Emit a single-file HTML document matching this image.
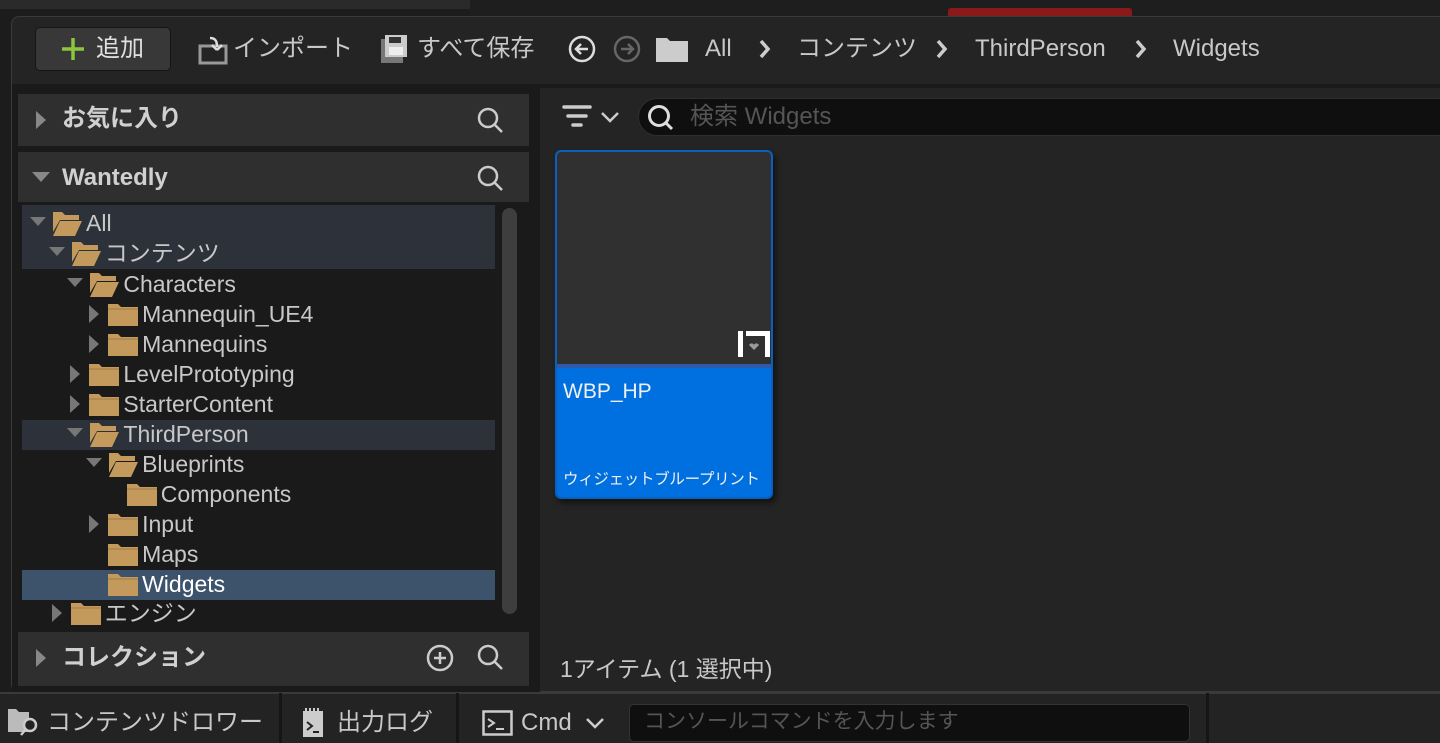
<!DOCTYPE html>
<html><head><meta charset="utf-8"><style>
*{margin:0;padding:0;box-sizing:border-box}
body{width:1440px;height:743px;overflow:hidden;background:#1c1c1c;font-family:"Liberation Sans","Noto Sans CJK JP",sans-serif;color:#c8c8c8;position:relative}
.a{position:absolute}
.t{position:absolute;white-space:nowrap;line-height:30px;font-size:23px}
</style></head><body>
<div class="a" style="left:0;top:0;width:470px;height:9px;background:#2a2a2a"></div>
<div class="a" style="left:470px;top:0;width:970px;height:16px;background:#1e1e1e"></div>
<div class="a" style="left:948px;top:8px;width:184px;height:10px;background:#8a1a1a;border-radius:3px"></div>
<div class="a" style="left:11px;top:16px;width:1440px;height:676px;background:#242424;border:1px solid #3a3a3a;border-radius:8px"></div>
<div class="a" style="left:35px;top:27px;width:136px;height:44px;background:#383838;border:1px solid #151515;border-radius:5px"></div>
<svg class="a" style="left:60px;top:36px" width="26" height="26"><path d="M13 2V24M2 13H24" stroke="#8cc63f" stroke-width="3.5"/></svg>
<div class="t" style="left:96px;top:34px;font-size:24px;color:#e0e0e0">追加</div>
<svg class="a" style="left:198px;top:34px" width="32" height="32"><rect x="2" y="12" width="26" height="17" fill="none" stroke="#999" stroke-width="3"/><path d="M12 4c6 0 7 4 7 9M19 16l-5-5M19 16l5-5" stroke="#ddd" stroke-width="2.5" fill="none"/></svg>
<div class="t" style="left:233px;top:34px;font-size:24px">インポート</div>
<svg class="a" style="left:381px;top:35px" width="28" height="28"><rect x="0" y="4" width="22" height="24" fill="#777"/><rect x="4" y="0" width="22" height="22" fill="#ccc"/><rect x="8" y="2" width="12" height="6" fill="#333"/><rect x="8" y="12" width="14" height="8" fill="#eee"/></svg>
<div class="t" style="left:417px;top:34px;font-size:24px">すべて保存</div>
<svg class="a" style="left:567px;top:34px" width="30" height="30"><circle cx="15" cy="15" r="12" fill="none" stroke="#ddd" stroke-width="2.5"/><path d="M21 15H9M14 10l-5 5 5 5" stroke="#ddd" stroke-width="2.5" fill="none"/></svg>
<svg class="a" style="left:612px;top:34px" width="30" height="30"><circle cx="15" cy="15" r="12" fill="none" stroke="#666" stroke-width="2.5"/><path d="M9 15H21M16 10l5 5-5 5" stroke="#666" stroke-width="2.5" fill="none"/></svg>
<svg class="a" style="left:656px;top:36px" width="32" height="26"><path d="M0 2h11l3 3h18v21H0z" fill="#ccc"/></svg>
<div class="t" style="left:705px;top:34px;font-size:24px">All</div>
<svg class="a" style="left:758px;top:39px" width="14" height="20"><path d="M3 2l7 8-7 8" stroke="#ccc" stroke-width="3.5" fill="none"/></svg>
<div class="t" style="left:797px;top:34px;font-size:24px">コンテンツ</div>
<svg class="a" style="left:935px;top:39px" width="14" height="20"><path d="M3 2l7 8-7 8" stroke="#ccc" stroke-width="3.5" fill="none"/></svg>
<div class="t" style="left:975px;top:34px;font-size:24px">ThirdPerson</div>
<svg class="a" style="left:1134px;top:39px" width="14" height="20"><path d="M3 2l7 8-7 8" stroke="#ccc" stroke-width="3.5" fill="none"/></svg>
<div class="t" style="left:1173px;top:34px;font-size:24px">Widgets</div>
<div class="a" style="left:12px;top:84px;width:1428px;height:4px;background:#1a1a1a"></div>
<div class="a" style="left:12px;top:88px;width:528px;height:604px;background:#1a1a1a"></div>
<div class="a" style="left:18px;top:94px;width:511px;height:52px;background:#2f2f2f"></div>
<svg class="a" style="left:35px;top:110px" width="12" height="20"><path d="M1 1L11 10 1 19z" fill="#888"/></svg>
<div class="t" style="left:62px;top:104px;font-size:24px;font-weight:bold;color:#d0d0d0">お気に入り</div>
<svg class="a" style="left:476px;top:106px" width="30" height="30"><circle cx="12" cy="12" r="9" fill="none" stroke="#ccc" stroke-width="2.5"/><path d="M18 18l8 8" stroke="#ccc" stroke-width="2.5"/></svg>
<div class="a" style="left:18px;top:152px;width:511px;height:50px;background:#2f2f2f"></div>
<svg class="a" style="left:31px;top:171px" width="20" height="12"><path d="M1 1H19L10 11z" fill="#888"/></svg>
<div class="t" style="left:62px;top:163px;font-size:24px;font-weight:bold;color:#d0d0d0">Wantedly</div>
<svg class="a" style="left:476px;top:164px" width="30" height="30"><circle cx="12" cy="12" r="9" fill="none" stroke="#ccc" stroke-width="2.5"/><path d="M18 18l8 8" stroke="#ccc" stroke-width="2.5"/></svg>
<div class="a" style="left:22px;top:205px;width:473px;height:64px;background:#2c313a"></div>
<div class="a" style="left:22px;top:420px;width:473px;height:30px;background:#2c313a"></div>
<div class="a" style="left:22px;top:570px;width:473px;height:30px;background:#3d536c"></div>
<div class="a" style="left:502px;top:208px;width:15px;height:406px;background:#3e3e3e;border-radius:8px"></div>
<div id="tree"></div>
<div class="a" style="left:18px;top:632px;width:511px;height:54px;background:#2f2f2f"></div>
<svg class="a" style="left:35px;top:648px" width="12" height="20"><path d="M1 1L11 10 1 19z" fill="#888"/></svg>
<div class="t" style="left:62px;top:643px;font-size:24px;font-weight:bold;color:#d0d0d0">コレクション</div>
<svg class="a" style="left:425px;top:643px" width="30" height="30"><circle cx="15" cy="15" r="12" fill="none" stroke="#ccc" stroke-width="2.5"/><path d="M15 9v12M9 15h12" stroke="#ccc" stroke-width="2.5"/></svg>
<svg class="a" style="left:476px;top:643px" width="30" height="30"><circle cx="12" cy="12" r="9" fill="none" stroke="#ccc" stroke-width="2.5"/><path d="M18 18l8 8" stroke="#ccc" stroke-width="2.5"/></svg>
<div class="a" style="left:540px;top:88px;width:900px;height:603px;background:#242424"></div>
<svg class="a" style="left:562px;top:104px" width="30" height="26"><path d="M2 3h26M6 12h18M11 21h8" stroke="#ccc" stroke-width="3.5" stroke-linecap="round"/></svg>
<svg class="a" style="left:600px;top:110px" width="20" height="14"><path d="M2 3l8 8 8-8" stroke="#ccc" stroke-width="2.5" fill="none"/></svg>
<div class="a" style="left:638px;top:98px;width:820px;height:38px;background:#0f0f0f;border:1px solid #2e2e2e;border-radius:19px"></div>
<svg class="a" style="left:645px;top:102px" width="32" height="32"><circle cx="14" cy="14" r="9.5" fill="none" stroke="#ddd" stroke-width="3"/><path d="M21 21l6 6" stroke="#ddd" stroke-width="3"/></svg>
<div class="t" style="left:690px;top:102px;font-size:24px;color:#555">検索 Widgets</div>
<div class="a" style="left:555px;top:150px;width:218px;height:349px;border:2px solid #0a5fbf;border-radius:6px;background:#303030;box-shadow:3px 4px 6px rgba(0,0,0,.5);overflow:hidden">
 <div class="a" style="left:0;top:212px;width:218px;height:4px;background:#2f5aa8"></div>
 <div class="a" style="left:0;top:216px;width:218px;height:135px;background:#0070e0"></div>
 <div class="t" style="left:6px;top:225px;font-size:21px;color:#f0f0f0">WBP_HP</div>
 <div class="t" style="left:6px;top:313px;font-size:15.5px;color:#f0f0f0;letter-spacing:-0.3px">ウィジェットブループリント</div>
</div>
<svg class="a" style="left:738px;top:331px" width="32" height="26"><rect x="0" y="0" width="5" height="26" fill="#fff"/><rect x="8" y="0" width="24" height="5" fill="#fff"/><rect x="27" y="0" width="5" height="26" fill="#fff"/><path d="M11 14c2-3 5-1 5 0 0-1 3-3 5 0l-5 5z" fill="#999"/></svg>
<div class="t" style="left:560px;top:654px;font-size:23px;color:#c8c8c8">1アイテム (1 選択中)</div>
<div class="a" style="left:0;top:692px;width:1440px;height:51px;background:#232323;border-top:2px solid #3a3a3a"></div>
<div class="a" style="left:279px;top:693px;width:3px;height:50px;background:#151515"></div>
<div class="a" style="left:456px;top:693px;width:3px;height:50px;background:#151515"></div>
<div class="a" style="left:1206px;top:693px;width:3px;height:50px;background:#151515"></div>
<svg class="a" style="left:8px;top:707px" width="34" height="30"><path d="M0 2h8l3 3h10v20H0z" fill="#bbb"/><circle cx="22" cy="18" r="6" fill="#232323" stroke="#ccc" stroke-width="2.5"/><path d="M18 22l-5 6" stroke="#ccc" stroke-width="2.5"/></svg>
<div class="t" style="left:47px;top:708px;font-size:24px">コンテンツドロワー</div>
<svg class="a" style="left:303px;top:708px" width="22" height="30"><rect x="0" y="3" width="20" height="26" fill="#ccc"/><path d="M3 0v5M7 0v5M11 0v5M15 0v5" stroke="#ccc" stroke-width="2"/><path d="M4 14l5 4-5 4M10 24h6" stroke="#222" stroke-width="2" fill="none"/></svg>
<div class="t" style="left:337px;top:708px;font-size:24px">出力ログ</div>
<svg class="a" style="left:482px;top:710px" width="32" height="26"><rect x="1.5" y="1.5" width="28" height="23" fill="none" stroke="#ccc" stroke-width="2.5"/><path d="M6 9l6 4-6 4M14 19h8" stroke="#ccc" stroke-width="2" fill="none"/></svg>
<div class="t" style="left:521px;top:708px;font-size:24px">Cmd</div>
<svg class="a" style="left:585px;top:716px" width="20" height="14"><path d="M2 3l8 8 8-8" stroke="#ccc" stroke-width="2.5" fill="none"/></svg>
<div class="a" style="left:629px;top:704px;width:561px;height:38px;background:#0f0f0f;border:1px solid #333;border-radius:5px"></div>
<div class="t" style="left:644px;top:707px;font-size:21px;color:#555">コンソールコマンドを入力します</div>
<script>
var rows=[[0,'d',1,'All',223],[1,'d',1,'コンテンツ',253],[2,'d',1,'Characters',284],[3,'r',0,'Mannequin_UE4',314],[3,'r',0,'Mannequins',344],[2,'r',0,'LevelPrototyping',374],[2,'r',0,'StarterContent',404],[2,'d',1,'ThirdPerson',434],[3,'d',1,'Blueprints',464],[4,'',0,'Components',494],[3,'r',0,'Input',524],[3,'',0,'Maps',554],[3,'',0,'Widgets',584],[1,'r',0,'エンジン',613]];
var h='';
rows.forEach(function(r){var o=r[0]*18.7,y=r[4];
if(r[1]=='d')h+='<svg class="a" style="left:'+(29+o)+'px;top:'+(y-7)+'px" width="18" height="12"><path d="M1 1H17L9 10z" fill="#777"/></svg>';
if(r[1]=='r')h+='<svg class="a" style="left:'+(32+o)+'px;top:'+(y-10)+'px" width="12" height="20"><path d="M1 1L11 10 1 19z" fill="#777"/></svg>';
if(r[2])h+='<svg class="a" style="left:'+(51+o)+'px;top:'+(y-13)+'px" width="32" height="28"><path d="M2 2h9l3 3h14v5H9L2 22z" fill="#c49a5c"/><path d="M9 11h22l-7 15H2z" fill="#c49a5c"/></svg>';
else h+='<svg class="a" style="left:'+(52+o)+'px;top:'+(y-12)+'px" width="30" height="26"><path d="M0 2h10l3 3h17v19H0z" fill="#c49a5c"/><path d="M0 7h30" stroke="#a07a44" stroke-width="1"/></svg>';
h+='<div class="t" style="left:'+(86+o)+'px;top:'+(y-15)+'px;color:'+(r[3]=='Widgets'?'#fff':'#c8c8c8')+'">'+r[3]+'</div>';});
document.getElementById('tree').innerHTML=h;
</script>
</body></html>
